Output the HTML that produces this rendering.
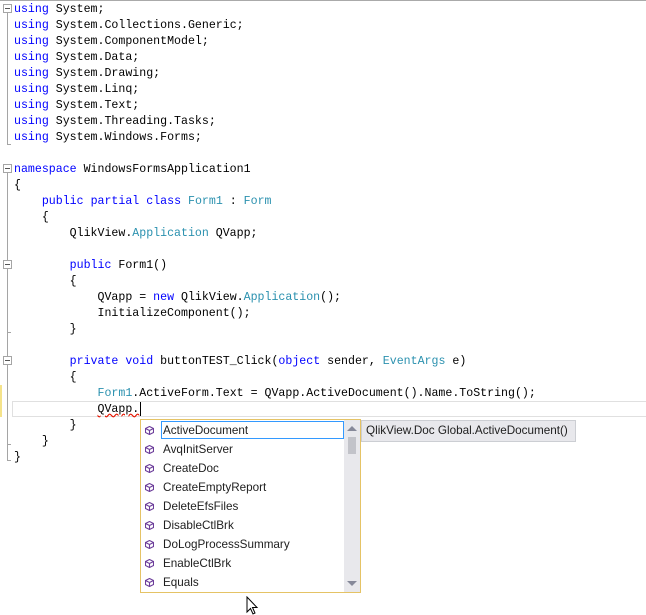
<!DOCTYPE html>
<html><head><style>
body{margin:0;width:646px;height:615px;background:#fff;position:relative;overflow:hidden;font-family:"Liberation Mono",monospace;}
.top{position:absolute;left:0;top:0;width:646px;height:1px;background:#aaa}
.code{position:absolute;left:14px;top:2px;font-size:11.6px;line-height:16px;white-space:pre;color:#000}
.k{color:#0000ff}.t{color:#2b91af}
.vl{position:absolute;left:7px;width:1px;background:#a5a5a5}
.box{position:absolute;left:3px;width:7px;height:7px;border:1px solid #a5a5a5;background:#fff}
.box:after{content:"";position:absolute;left:1px;top:3px;width:5px;height:1px;background:#555}
.tick{position:absolute;left:7px;width:4px;height:1px;background:#a5a5a5}
.cur{position:absolute;left:12px;top:401px;width:640px;height:14px;border:1px solid #e0e0e0}
.pop{position:absolute;left:140px;top:419px;width:219px;height:172px;border:1px solid #e5c365;background:#fff;font-family:"Liberation Sans",sans-serif;font-size:11.7px}
.it{position:absolute;left:22px;height:19px;line-height:19px;color:#1e1e1e}
.ic{position:absolute;left:4px;width:9px;height:9px}
.sel{position:absolute;left:20px;top:1px;width:181px;height:16px;border:1px solid #3399ff}
.sb{position:absolute;left:203px;top:0;width:16px;height:172px;background:#e8e8ec}
.tip{position:absolute;left:361px;top:420px;width:215px;height:22px;background:#e8e8ec;border:1px solid #ccced3;font-family:"Liberation Sans",sans-serif;font-size:11.7px;line-height:20px;padding-left:4px;box-sizing:border-box;color:#1e1e1e;white-space:nowrap;overflow:hidden}
</style></head><body>
<div class="top"></div>
<div class="vl" style="top:9px;height:136px"></div><div class="tick" style="top:144px"></div>
<div class="vl" style="top:169px;height:292px"></div><div class="tick" style="top:460px"></div>
<div class="tick" style="top:332px"></div><div class="tick" style="top:444px"></div>
<div class="box" style="top:4px"></div>
<div class="box" style="top:164px"></div>
<div class="box" style="top:260px"></div>
<div class="box" style="top:356px"></div>
<div style="position:absolute;left:0;top:385px;width:2px;height:32px;background:#f5e38a"></div>
<div class="cur"></div>
<div class="code"><span class="k">using</span> System;
<span class="k">using</span> System.Collections.Generic;
<span class="k">using</span> System.ComponentModel;
<span class="k">using</span> System.Data;
<span class="k">using</span> System.Drawing;
<span class="k">using</span> System.Linq;
<span class="k">using</span> System.Text;
<span class="k">using</span> System.Threading.Tasks;
<span class="k">using</span> System.Windows.Forms;

<span class="k">namespace</span> WindowsFormsApplication1
{
    <span class="k">public</span> <span class="k">partial</span> <span class="k">class</span> <span class="t">Form1</span> : <span class="t">Form</span>
    {
        QlikView.<span class="t">Application</span> QVapp;

        <span class="k">public</span> Form1()
        {
            QVapp = <span class="k">new</span> QlikView.<span class="t">Application</span>();
            InitializeComponent();
        }

        <span class="k">private</span> <span class="k">void</span> buttonTEST_Click(<span class="k">object</span> sender, <span class="t">EventArgs</span> e)
        {
            <span class="t">Form1</span>.ActiveForm.Text = QVapp.ActiveDocument().Name.ToString();
            <span style="text-decoration:underline wavy #e51400">QVapp.</span>
        }
    }
}</div>
<div style="position:absolute;left:140px;top:402px;width:1px;height:14px;background:#000"></div>
<div class="pop">
<div class="sel"></div>
<div class="sb"><div style="position:absolute;left:3px;top:6px;border:5px solid transparent;border-bottom:5px solid #868999;border-top:0"></div><div style="position:absolute;left:4px;top:17px;width:8px;height:17px;background:#c2c3c9"></div><div style="position:absolute;left:3px;top:161px;border:5px solid transparent;border-top:5px solid #868999;border-bottom:0"></div></div>
</div>
<div class="tip">QlikView.Doc Global.ActiveDocument()</div>
<svg style="position:absolute;left:246px;top:596px" width="14" height="19"><path d="M1 1 L1 16 L4.5 12.5 L7 18 L9 17 L6.5 11.5 L11 11.5 Z" fill="#fff" stroke="#000" stroke-width="1"/></svg>
<script>
var n=["ActiveDocument","AvqInitServer","CreateDoc","CreateEmptyReport","DeleteEfsFiles","DisableCtlBrk","DoLogProcessSummary","EnableCtlBrk","Equals"];
var p=document.querySelector('.pop');
n.forEach(function(s,i){var y=i*19+1;
p.insertAdjacentHTML('beforeend','<svg class="ic" style="top:'+(y+5)+'px" viewBox="0 0 9 9"><path d="M4.5 0.5 L8.5 2.5 L8.5 6.5 L4.5 8.5 L0.5 6.5 L0.5 2.5 Z M0.5 2.5 L4.5 4.5 L8.5 2.5 M4.5 4.5 L4.5 8.5" fill="none" stroke="#6c3d9a" stroke-width="1.1"/></svg><div class="it" style="top:'+y+'px">'+s+'</div>');});
</script>
</body></html>
